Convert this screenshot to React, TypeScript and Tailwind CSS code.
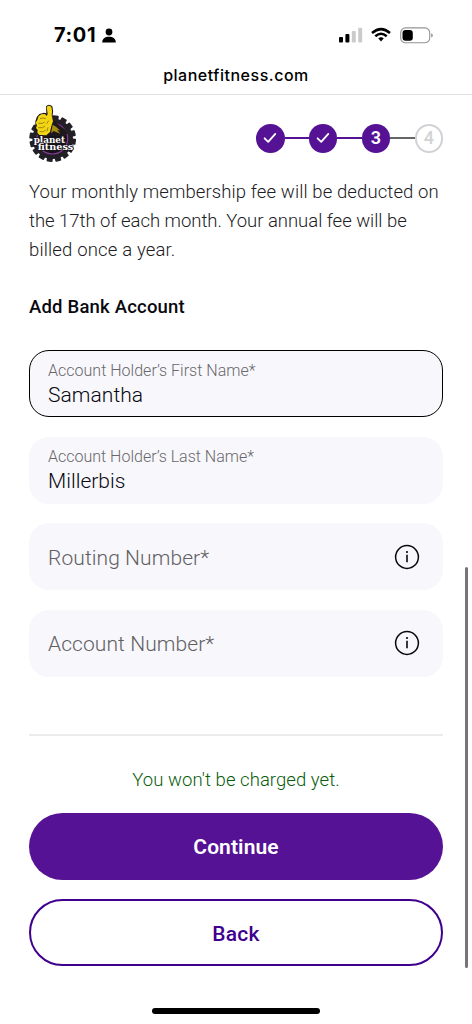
import React from "react";

const teeth = Array.from({ length: 16 }, (_, i) => i * 22.5 + 8);

function Logo() {
  return (
    <svg width="50" height="60" viewBox="24 15 150 180" role="img" aria-label="planet fitness">
      <g fill="#231f26">
        <circle cx="98" cy="122" r="61" />
        {teeth.map((a) => (
          <rect key={a} x="89" y="52" width="18" height="18" rx="3" transform={`rotate(${a} 98 122)`} />
        ))}
      </g>
      <circle cx="97" cy="122" r="46" fill="#17131a" stroke="#8a3a9c" strokeWidth="3.5" />
      <path
        d="M78 25 Q87 16 97 25 Q101 38 98 52 L102 68 Q114 80 134 94 L144 104 L132 116 L98 114 L74 116 L54 114 L46 98 L46 70 Q48 56 58 48 L72 44 L79 46 Z"
        fill="#1c181b"
      />
      <path
        d="M80 27 Q87 19 94 27 Q98 38 95 52 L99 70 L94 84 L90 102 L79 112 L58 111 L52 104 L53 96 L48 90 L51 82 L47 74 L52 66 L56 54 L64 49 L75 48 L80 54 L83 48 Z"
        fill="#f3d514"
      />
      <path d="M60 62 L68 60 L77 62 M55 76 H67 L74 72 M55 89 H68 L75 84 M59 101 H70 L77 96 M80 77 L86 68 M84 88 L81 100" fill="none" stroke="#6b5d10" strokeWidth="2" />
      <path d="M98 80 L108 86 L121 98 L111 95 L121 107 L101 99 L93 106 Z" fill="#a58c12" />
      <g
        fontFamily='"DejaVu Serif", serif'
        fontWeight="700"
        fontSize="28"
        fill="#fff"
        stroke="#17131a"
        strokeWidth="4"
        paintOrder="stroke"
        strokeLinejoin="round"
      >
        <text x="41" y="135" textLength="94" lengthAdjust="spacingAndGlyphs">planet</text>
        <text x="53" y="156" textLength="107" lengthAdjust="spacingAndGlyphs">fitness</text>
      </g>
    </svg>
  );
}

function StatusBar() {
  return (
    <div className="flex h-[54px] items-start justify-between pt-[25px] pr-[38px] pl-[54px]">
      <div className="flex items-center gap-[6px]">
        <span className="font-['Inter'] text-[20px] leading-[21px] font-bold tracking-[0.600px]">7:01</span>
        <svg width="14" height="15" viewBox="0 0 14 15">
          <circle cx="7" cy="4" r="3.4" />
          <path d="M.2 14.5C.2 10.800 3 8.800 7 8.800s6.800 2 6.800 5.700z" />
        </svg>
      </div>
      <div className="flex items-center pt-[1.500px]">
        <svg width="24" height="16" viewBox="0 0 24 16">
          <rect x="0" y="10" width="4" height="5.500" rx="1" />
          <rect x="6.400" y="7" width="4" height="8.500" rx="1" />
          <rect x="12.800" y="4" width="4" height="11.500" rx="1" fill="#cbcbcb" />
          <rect x="19.200" y="0.800" width="4" height="14.700" rx="1" fill="#cbcbcb" />
        </svg>
        <svg className="ml-[8px]" width="20" height="16" viewBox="0 0 20 16" fill="none" stroke="#000" strokeWidth="2.500">
          <path d="M1 6Q10-1.800 19 6" />
          <path d="M4.300 9.200Q10 4.200 15.700 9.200" />
          <path d="M7.200 11.300Q10 9.100 12.800 11.300L10 14.400Z" fill="#000" stroke="none" />
        </svg>
        <svg className="ml-[9px]" width="34" height="17" viewBox="0 0 34 17">
          <rect x="0.700" y="0.900" width="29" height="14.900" rx="4.800" fill="none" stroke="#949494" strokeWidth="1.100" />
          <rect x="2.500" y="3" width="10.300" height="10.800" rx="3" />
          <path d="M31.200 6.300q1.600.600 1.600 2.100t-1.600 2.100z" fill="#949494" />
        </svg>
      </div>
    </div>
  );
}

function Check() {
  return (
    <svg width="14" height="12" viewBox="0 0 14 12" fill="none" stroke="#fff" strokeWidth="1.800" strokeLinecap="round" strokeLinejoin="round">
      <path d="M1.600 6.300 5.200 9.900 12.300 1.900" />
    </svg>
  );
}

const dot = "flex size-[28.500px] shrink-0 items-center justify-center rounded-full font-['Roboto'] text-[18px] leading-none";

function Stepper() {
  return (
    <div className="flex items-center">
      <div className={`${dot} bg-[#551294]`}><Check /></div>
      <div className="h-[2px] w-[24.300px] bg-[#551294]" />
      <div className={`${dot} bg-[#551294]`}><Check /></div>
      <div className="h-[2px] w-[24.300px] bg-[#551294]" />
      <div className={`${dot} bg-[#551294] font-semibold text-white`}>3</div>
      <div className="h-[2px] w-[24.300px] bg-[#666]" />
      <div className={`${dot} border-2 border-[#d2d2d6] font-medium text-[#d2d2d6]`}>4</div>
    </div>
  );
}

function FilledField({ label, value, active = false, labelClass, valueClass }: { label: string; value: string; active?: boolean; labelClass: string; valueClass: string }) {
  return (
    <div className={`h-[67px] rounded-[20px] border bg-[#f8f7fc] pt-[9.500px] pl-[18px] ${active ? "border-black" : "border-transparent"}`}>
      <div className={`text-[16px] leading-[20px] text-[#68686b] ${labelClass}`}>{label}</div>
      <div className={`text-[21px] leading-[28px] text-[#08080f] ${valueClass}`}>{value}</div>
    </div>
  );
}

function EmptyField({ label }: { label: string }) {
  return (
    <div className="flex h-[67px] items-center justify-between rounded-[20px] bg-[#f8f7fc] pr-[23px] pl-[19px]">
      <span className="pt-[2px] text-[21px] leading-[28px] tracking-[0.080px] text-[#606063]">{label}</span>
      <svg width="26" height="26" viewBox="0 0 26 26" fill="none" stroke="#08080f">
        <circle cx="13" cy="13" r="11.400" strokeWidth="1.500" />
        <path d="M13 10.700V18.300" strokeWidth="1.600" />
        <circle cx="13" cy="8" r="1.100" fill="#08080f" stroke="none" />
      </svg>
    </div>
  );
}

export default function App() {
  return (
    <div className="relative flex h-[1024px] w-[472px] flex-col overflow-hidden bg-white font-['Roboto',sans-serif] font-light text-black">
      <StatusBar />
      <div className="h-[41px] border-b border-[#e0e0e0] pt-[10px] text-center font-['Inter'] text-[16px] leading-[22px] font-medium tracking-[0.520px]">
        planetfitness.com
      </div>
      <main className="flex flex-col px-[29px]">
        <div className="flex h-[83px] items-start justify-between pt-[8px]">
          <div className="-ml-px"><Logo /></div>
          <div className="pt-[21px]"><Stepper /></div>
        </div>
        <p className="text-[18.500px] leading-[29px] text-[#202024]">
          <span className="block whitespace-nowrap tracking-[0.110px]">Your monthly membership fee will be deducted on</span>
          <span className="block whitespace-nowrap tracking-[-0.030px]">the 17th of each month. Your annual fee will be</span>
          <span className="block whitespace-nowrap tracking-[0.160px]">billed once a year.</span>
        </p>
        <h2 className="mt-[27px] text-[18.500px] leading-[30px] font-medium tracking-[0.200px] text-[#08080f]">Add Bank Account</h2>
        <div className="mt-[28px] flex flex-col gap-[19.500px]">
          <FilledField label="Account Holder’s First Name*" value="Samantha" active labelClass="tracking-[0.020px]" valueClass="tracking-[0.050px]" />
          <FilledField label="Account Holder’s Last Name*" value="Millerbis" labelClass="tracking-[0px]" valueClass="tracking-[0.020px]" />
          <EmptyField label="Routing Number*" />
          <EmptyField label="Account Number*" />
        </div>
        <div className="mt-[57.500px] h-[2px] bg-[#ebebeb]" />
        <p className="mt-[29px] text-center text-[18.500px] leading-[30px] tracking-[0.060px] text-[#085c0c]">You won't be charged yet.</p>
        <button className="mt-[17.500px] h-[67px] rounded-full bg-[#551294] pt-[3px] text-[21px] font-semibold tracking-[0.100px] text-white">Continue</button>
        <button className="mt-[19.500px] h-[67px] rounded-full border-2 border-[#40008f] pt-[4px] text-[21px] font-medium tracking-[0.300px] text-[#40008f]">Back</button>
      </main>
      <div className="absolute top-[567px] right-[4px] h-[401px] w-[3px] rounded-full bg-[#767676]" />
      <div className="absolute bottom-[10px] left-[152px] h-[6px] w-[168px] rounded-full bg-black" />
    </div>
  );
}
